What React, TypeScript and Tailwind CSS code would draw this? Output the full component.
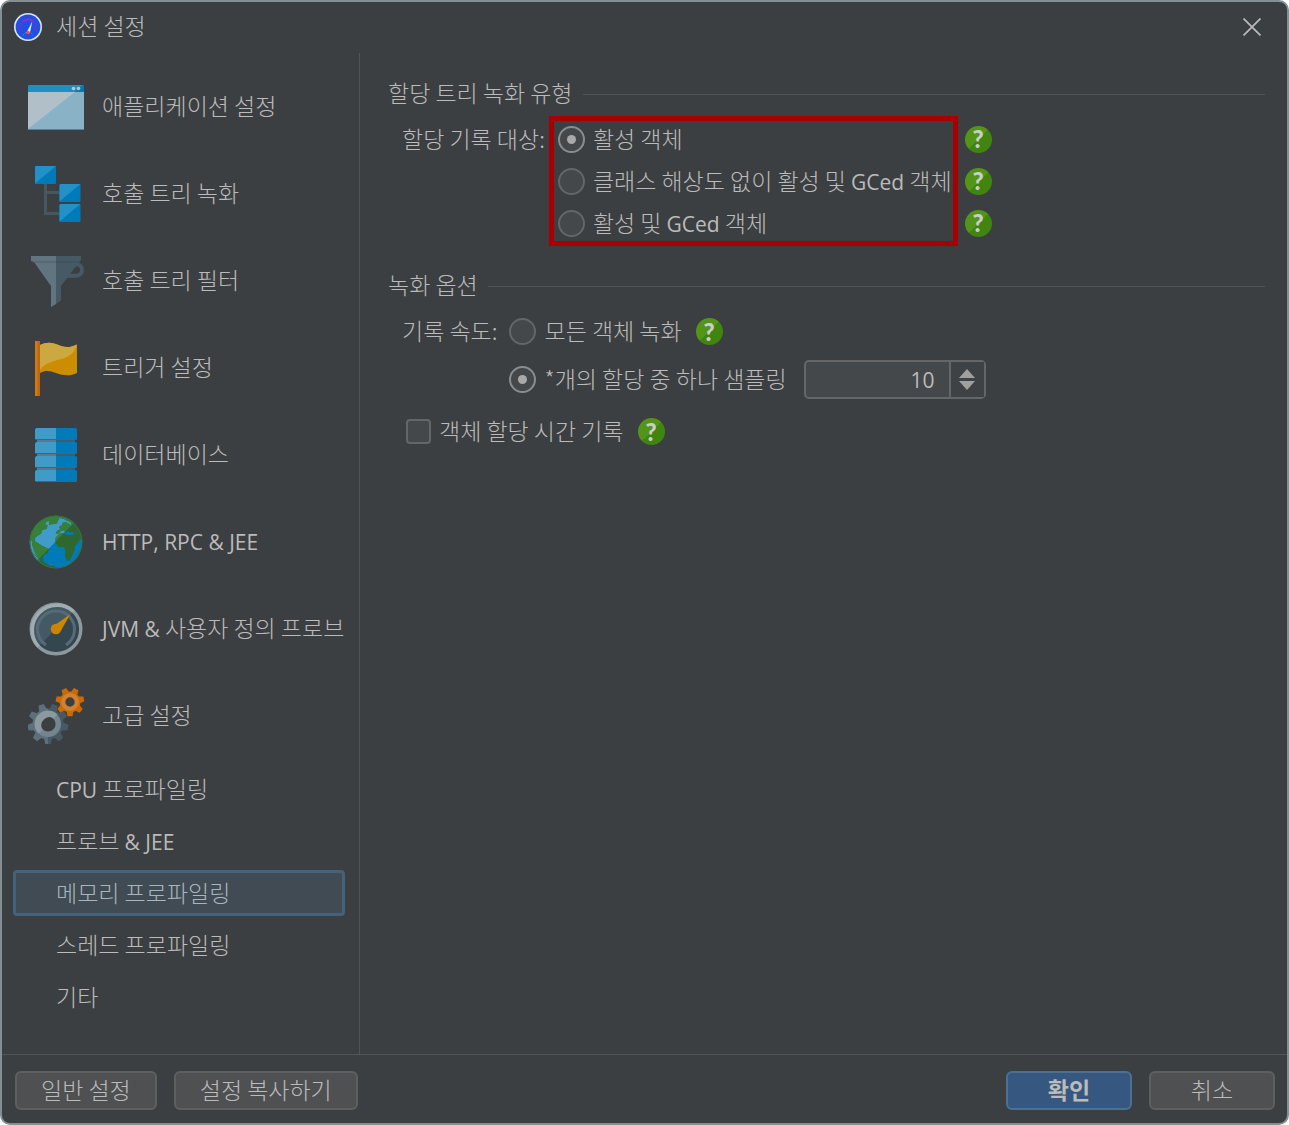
import { useState } from "react";
import type { ReactNode } from "react";

// Closed outline of a cog wheel around (cx, cy), with one tooth pointing down
function gearPath(cx: number, cy: number, teeth: number, outer: number, inner: number) {
  const step = (Math.PI * 2) / teeth;
  const points: string[] = [];
  for (let i = 0; i < teeth; i++) {
    const a = Math.PI / 2 + i * step;
    const corners: [number, number][] = [
      [inner, a - step * 0.36],
      [outer, a - step * 0.19],
      [outer, a + step * 0.19],
      [inner, a + step * 0.36],
    ];
    corners.forEach(([r, t]) => {
      points.push(`${(cx + r * Math.cos(t)).toFixed(2)} ${(cy + r * Math.sin(t)).toFixed(2)}`);
    });
  }
  return `M${points.join("L")}Z`;
}

function Icon({ children, viewBox = "0 0 56 56" }: { children: ReactNode; viewBox?: string }) {
  return (
    <svg viewBox={viewBox} className="size-14 shrink-0" aria-hidden="true">
      {children}
    </svg>
  );
}

function WindowIcon() {
  return (
    <Icon>
      <path d="M1 6H55L56 7V13H0V7Z" fill="#1f8fc5" />
      <path d="M56 7V13H47L55 6Z" fill="#0279b5" />
      <path d="M0 13H56V51H0Z" fill="#8ab2c6" />
      <path d="M0 13H47L0 50Z" fill="#b0bfc8" />
      <path d="M0 50H56V51H0Z" fill="#5c7f95" />
      <circle cx="45.5" cy="9.5" r="1.8" fill="#b4c6d0" />
      <circle cx="50.5" cy="9.5" r="1.8" fill="#b4c6d0" />
    </Icon>
  );
}

function TreeIcon() {
  const boxes = [
    [7, 0],
    [31.5, 18],
    [31.5, 38],
  ];
  return (
    <Icon>
      <path d="M17.5 17V47.5H32M17.5 26.5H32" fill="none" stroke="#455862" strokeWidth="3" />
      {boxes.map(([x, y]) => (
        <g key={y}>
          <rect x={x} y={y} width="21" height="18" rx="1" fill="#007ab8" />
          <path d={`M${x + 1} ${y}H${x + 21}L${x} ${y + 17.5}V${y + 1}Z`} fill="#2191c8" />
        </g>
      ))}
    </Icon>
  );
}

function FunnelIcon() {
  return (
    <Icon>
      <path d="M39 22.7H48.3A5.7 5.7 0 0 0 48.3 11.3H46" fill="none" stroke="#455a64" strokeWidth="4" />
      <path d="M28 3H53V7L50 10.5L33 33V47.5L28 51Z" fill="#455a64" />
      <path d="M3 3H28V51L23 54V33L6 9L3 8Z" fill="#607580" />
      <path d="M5 9H28" stroke="#4c616c" strokeWidth="1" />
      <path d="M28 9H50" stroke="#3b4e57" strokeWidth="1" />
    </Icon>
  );
}

function FlagIcon() {
  return (
    <Icon>
      <path d="M7 1H12V56H7Z" fill="#c4660f" />
      <path d="M7 1H9.5V56H7Z" fill="#c87d1c" />
      <path d="M12 5C20 1 26 3 33 6C39 8 44 7 49 4.5V33C42 36.5 35 35.5 28 33C22 30.5 17 30 12 33Z" fill="#cc8d00" />
      <path d="M12 5C20 1 26 3 33 6C39 8 44 7 49 4.5C44 24 22 16 12 30Z" fill="#cca840" />
    </Icon>
  );
}

function DatabaseIcon() {
  return (
    <Icon>
      <path d="M9 10H28V48H9Z" fill="#607886" />
      <path d="M28 10H47V48H28Z" fill="#455a64" />
      {[1, 15, 29, 43].map((y) => (
        <g key={y}>
          <rect x="7" y={y} width="42" height="12" rx="1.5" fill="#007ab8" />
          <path d={`M8.5 ${y}H28V${y + 11}H7V${y + 1.5}Z`} fill="#409bc8" />
        </g>
      ))}
    </Icon>
  );
}

function GlobeIcon() {
  return (
    <Icon viewBox="5 5 168 168">
      <defs>
        <clipPath id="globe-disc">
          <circle cx="89" cy="89" r="79" />
        </clipPath>
        <clipPath id="globe-lit">
          <path d="M0 0H173L0 178Z" />
        </clipPath>
      </defs>
      <g clipPath="url(#globe-disc)">
        <circle cx="89" cy="89" r="79" fill="#007ab8" />
        <path d="M0 0H173L0 178Z" fill="#409bc8" />
        {["#2e6830", "#388038"].map((fill, i) => (
          <g key={fill} fill={fill} clipPath={i ? "url(#globe-lit)" : undefined}>
            <path d="M5 92V5H104L96 15L98 20L90 34L76 36L68 38L68 26L58 28L57 36L64 40L60 50L48 52L44 64L33 70L26 77L25 87L33 91L48 101L68 110L64 123L53 128L49 136L50 146L43 150L38 140L25 127L18 104L15 88Z" />
            <path d="M104 5L96 16L112 19L122 25L132 29L138 40L128 35L119 30L109 31L107 38L98 44L102 51L92 55L88 64L98 63L104 55L112 54L118 61L124 57L131 60L142 60L141 68L122 67L113 62L99 64L88 76L87 91L96 104L113 104L117 113L116 130L122 146L132 143L138 129L146 111L145 104L156 89L165 78L160 93L158 112L148 130L173 120V5Z" />
            <path d="M44 147L50 138L52 149L67 158L98 166L130 157L148 137L140 173H40Z" />
          </g>
        ))}
        <path d="M162 80L155 101L153 121L144 137L154 129L165 107L168 87Z" fill="#007ab8" />
        <path d="M17 83L17 98L24 119L34 135L25 125L16 110L12 91Z" fill="#409bc8" />
      </g>
      <circle cx="89" cy="89" r="78" fill="none" stroke="#34733a" strokeWidth="3" />
    </Icon>
  );
}

function GaugeIcon() {
  return (
    <Icon>
      <circle cx="28" cy="28" r="24" fill="#34474f" />
      <path d="M45 11A24 24 0 0 0 11 45Z" fill="#435963" />
      <path d="M18 44A18.5 18.5 0 1 1 38 44" fill="none" stroke="#556b76" strokeWidth="3" />
      <circle cx="28" cy="28" r="24.8" fill="none" stroke="#8b999f" strokeWidth="3.4" />
      <path d="M45.5 10.5A24.8 24.8 0 0 0 10.5 45.5" fill="none" stroke="#a2acb0" strokeWidth="3.4" />
      <path d="M42.5 13L33 29.5L27 24Z" fill="#cc8800" />
      <circle cx="28" cy="28" r="5.3" fill="#cc8500" />
    </Icon>
  );
}

function GearsIcon() {
  return (
    <Icon>
      <defs>
        <linearGradient id="gear-big">
          <stop offset="0.5" stopColor="#5c707b" />
          <stop offset="0.5" stopColor="#455a64" />
        </linearGradient>
      </defs>
      <path d={gearPath(20, 36, 9, 20.5, 15.5)} fill="url(#gear-big)" />
      <circle cx="20" cy="36" r="10.3" fill="#3c3f41" stroke="#74858e" strokeWidth="5.4" />
      <path d="M29.5 26.5A13 13 0 0 0 10.5 45.5L14.5 41.5A8 8 0 0 1 25.5 30.5Z" fill="#8c9a9f" />
      <path d={gearPath(42, 14, 7, 14.5, 10.5)} fill="#c96a05" />
      <circle cx="42" cy="14" r="6.8" fill="#3c3f41" stroke="#d08230" strokeWidth="4.2" />
    </Icon>
  );
}

function AppIcon() {
  return (
    <svg viewBox="0 0 28 28" className="size-7 shrink-0" aria-hidden="true">
      <circle cx="14" cy="14" r="14" fill="#dce4f2" />
      <circle cx="14" cy="14" r="12.4" fill="#1f50e6" />
      <path d="M7 18A8 8 0 1 1 21 18" fill="none" stroke="#6a35cf" strokeWidth="1.6" />
      <path d="M9 8.5A8 8 0 0 1 18.5 8" fill="none" stroke="#a02cc0" strokeWidth="1.4" />
      <path d="M9 22.5A5.5 5.5 0 0 1 19 22.5" fill="none" stroke="#4c8fe8" strokeDasharray="2 1" />
      <path d="M18.3 8.5L15.8 20H12.4Z" fill="#f4f2fa" />
      <circle cx="14" cy="19.5" r="1.8" fill="#f0503c" />
    </svg>
  );
}

const sections = [
  { name: "애플리케이션 설정", icon: WindowIcon },
  { name: "호출 트리 녹화", icon: TreeIcon },
  { name: "호출 트리 필터", icon: FunnelIcon },
  { name: "트리거 설정", icon: FlagIcon },
  { name: "데이터베이스", icon: DatabaseIcon },
  { name: "HTTP, RPC & JEE", icon: GlobeIcon },
  { name: "JVM & 사용자 정의 프로브", icon: GaugeIcon },
  { name: "고급 설정", icon: GearsIcon },
];

const advanced = ["CPU 프로파일링", "프로브 & JEE", "메모리 프로파일링", "스레드 프로파일링", "기타"];

const recordingTypes = ["활성 객체", "클래스 해상도 없이 활성 및 GCed 객체", "활성 및 GCed 객체"];

// Latin words get their own, slightly smaller font next to the Korean text
function Label({ text }: { text: string }) {
  return (
    <span className="pb-[3px] whitespace-nowrap">
      {text.split(/([A-Za-z&,]+(?: [A-Za-z&,]+)*)/).map((part, i) =>
        i % 2 ? (
          <span key={i} className="font-['Open_Sans',sans-serif] text-[21px] leading-none font-normal">
            {part}
          </span>
        ) : (
          part
        )
      )}
    </span>
  );
}

function HelpButton() {
  return (
    <button
      type="button"
      aria-label="도움말"
      className="flex size-[27px] shrink-0 items-center justify-center rounded-full bg-[linear-gradient(135deg,#539517_50%,#408510_50%)] font-[Lato,sans-serif] text-[24px] leading-none font-black text-[#cccccc]"
    >
      ?
    </button>
  );
}

interface RadioProps {
  name: string;
  label: string;
  checked: boolean;
  onChange: () => void;
}

function Radio({ name, label, checked, onChange }: RadioProps) {
  return (
    <label className="flex items-center gap-2">
      <input
        type="radio"
        name={name}
        checked={checked}
        onChange={onChange}
        className="grid size-[27px] shrink-0 appearance-none place-content-center rounded-full border-2 border-[#646668] bg-[#45484a] checked:border-[#8c8d8e] checked:before:size-[9px] checked:before:rounded-full checked:before:bg-[#a9a9a9]"
      />
      <Label text={label} />
    </label>
  );
}

function GroupTitle({ title }: { title: string }) {
  return (
    <h2 className="flex h-[30px] items-center gap-[10px]">
      <Label text={title} />
      <span className="mt-[3px] h-px flex-1 bg-[#515557]" />
    </h2>
  );
}

const buttonClass = "h-[39px] rounded-md border-2 border-[#5e6060] bg-[#4e5052]";

export default function App() {
  const [page, setPage] = useState("메모리 프로파일링");
  const [recordingType, setRecordingType] = useState(0);
  const [sampled, setSampled] = useState(true);
  const [rate, setRate] = useState(10);
  const [recordTime, setRecordTime] = useState(false);

  return (
    <div className="flex min-h-screen flex-col rounded-[10px] border-2 border-[#848f95] bg-[#3c3f41] font-['Noto_Sans_CJK_KR',sans-serif] text-[23px] leading-[30px] font-light text-[#bbbbbb]">
      <header className="flex h-[51px] items-center gap-[14px] pr-[26px] pb-[2px] pl-3">
        <AppIcon />
        <h1 className="flex flex-1">
          <Label text="세션 설정" />
        </h1>
        <button type="button" aria-label="닫기">
          <svg viewBox="0 0 18 18" className="size-[18px]" aria-hidden="true">
            <path d="M0.5 0.5L17.5 17.5M17.5 0.5L0.5 17.5" stroke="#bbbbbb" strokeWidth="1.7" />
          </svg>
        </button>
      </header>

      <div className="flex flex-1">
        {/* Sidebar */}
        <nav className="w-[358px] shrink-0 border-r border-[#515557] pt-[10px] pr-[14px] pl-[11px]">
          {sections.map(({ name, icon: SectionIcon }) => (
            <button
              key={name}
              type="button"
              className="flex h-[87px] w-full items-center gap-[18px] pl-[15px] text-left"
            >
              <SectionIcon />
              <Label text={name} />
            </button>
          ))}
          <div className="mt-[7px] flex flex-col gap-[6px]">
            {advanced.map((name) => (
              <button
                key={name}
                type="button"
                onClick={() => setPage(name)}
                className={`flex h-[46px] items-center rounded-[4px] border-[3px] pl-10 ${
                  page === name ? "border-[#43627b] bg-[#404b54] text-[#a9b5bd]" : "border-transparent"
                }`}
              >
                <Label text={name} />
              </button>
            ))}
          </div>
        </nav>

        {/* Settings */}
        <main className="flex-1 pt-[25px] pr-[22px] pl-7">
          <GroupTitle title="할당 트리 녹화 유형" />
          <div className="mt-2 flex pl-[14px]">
            <div className="mr-1 flex h-[46px] items-center">
              <Label text="할당 기록 대상:" />
            </div>
            <div className="flex flex-col gap-[6px] border-[5px] border-[#a80000] pr-px pl-1">
              {recordingTypes.map((label, i) => (
                <div key={label} className="flex h-9 items-center">
                  <Radio
                    name="recording-type"
                    label={label}
                    checked={recordingType === i}
                    onChange={() => setRecordingType(i)}
                  />
                </div>
              ))}
            </div>
            <div className="ml-[7px] flex flex-col gap-[6px] py-[5px]">
              {recordingTypes.map((label) => (
                <div key={label} className="flex h-9 items-center">
                  <HelpButton />
                </div>
              ))}
            </div>
          </div>

          <div className="mt-6">
            <GroupTitle title="녹화 옵션" />
          </div>
          <div className="mt-3 flex pl-[14px]">
            <div className="mr-3 flex h-[39px] items-center">
              <Label text="기록 속도:" />
            </div>
            <div className="flex flex-col gap-[9px]">
              <div className="flex h-[39px] items-center gap-[14px]">
                <Radio name="rate" label="모든 객체 녹화" checked={!sampled} onChange={() => setSampled(false)} />
                <HelpButton />
              </div>
              <div className="flex h-[39px] items-center gap-[17px]">
                <Radio
                  name="rate"
                  label="*개의 할당 중 하나 샘플링"
                  checked={sampled}
                  onChange={() => setSampled(true)}
                />
                <div className="flex h-[39px] w-[182px] rounded-[5px] border-2 border-[#646668] bg-[#45484a]">
                  <input
                    type="text"
                    inputMode="numeric"
                    aria-label="샘플링 비율"
                    value={rate}
                    onChange={(e) => setRate(Number(e.target.value) || 0)}
                    className="w-0 flex-1 pr-[14px] text-right font-['Open_Sans',sans-serif] text-[21px] font-normal outline-none"
                  />
                  <div className="flex w-[35px] flex-col items-center justify-center gap-[3px] border-l-2 border-[#646668] bg-[#3f4244]">
                    <button type="button" aria-label="증가" onClick={() => setRate(rate + 1)}>
                      <svg viewBox="0 0 16 9" className="h-[9px] w-4" aria-hidden="true">
                        <path d="M8 0L16 9H0Z" fill="#a0a0a0" />
                      </svg>
                    </button>
                    <button type="button" aria-label="감소" onClick={() => setRate(rate - 1)}>
                      <svg viewBox="0 0 16 9" className="h-[9px] w-4" aria-hidden="true">
                        <path d="M8 9L16 0H0Z" fill="#a0a0a0" />
                      </svg>
                    </button>
                  </div>
                </div>
              </div>
            </div>
          </div>
          <div className="mt-[13px] flex h-[39px] items-center gap-[14px] pl-[18px]">
            <label className="flex items-center gap-2">
              <input
                type="checkbox"
                checked={recordTime}
                onChange={(e) => setRecordTime(e.target.checked)}
                className="size-[25px] appearance-none rounded-[4px] border-2 border-[#646668] bg-[#45484a] checked:bg-[#a9a9a9]"
              />
              <Label text="객체 할당 시간 기록" />
            </label>
            <HelpButton />
          </div>
        </main>
      </div>

      <footer className="flex gap-[17px] border-t border-[#515557] pt-4 pr-3 pb-[13px] pl-[13px]">
        <button type="button" className={`${buttonClass} px-6 pb-[3px]`}>
          일반 설정
        </button>
        <button type="button" className={`${buttonClass} px-6 pb-[3px]`}>
          설정 복사하기
        </button>
        <div className="flex-1" />
        <button
          type="button"
          className="h-[39px] w-[126px] rounded-md border-2 border-[#4c708f] bg-[#365880] pb-[3px] font-bold"
        >
          확인
        </button>
        <button type="button" className={`${buttonClass} w-[126px] pb-[3px]`}>
          취소
        </button>
      </footer>
    </div>
  );
}
